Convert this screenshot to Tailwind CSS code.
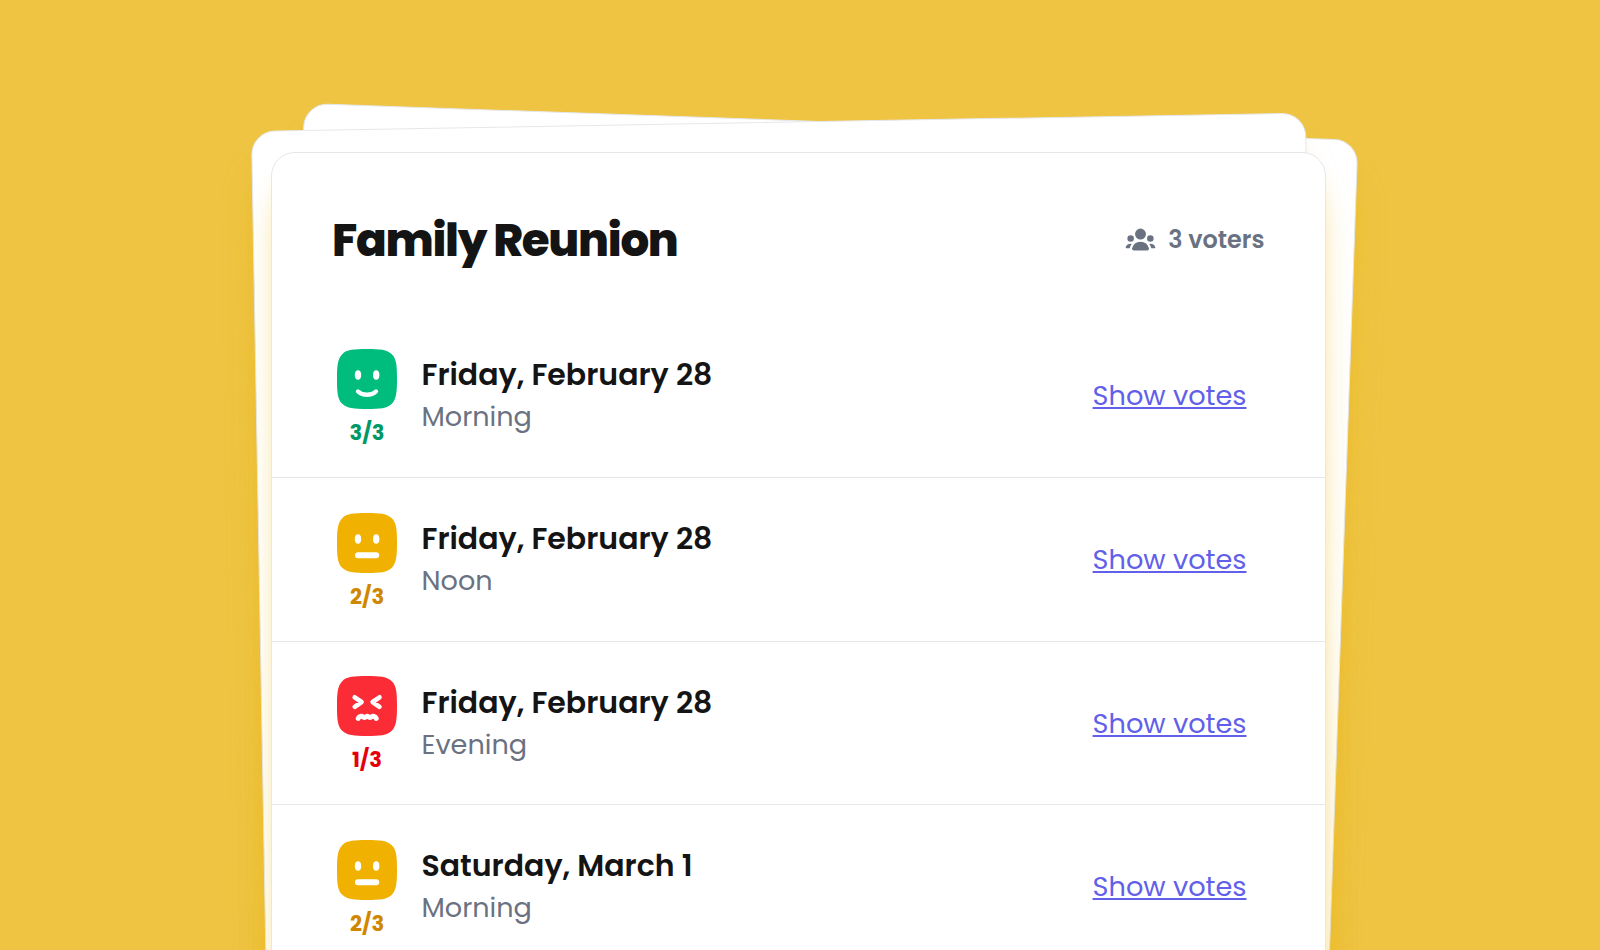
<!DOCTYPE html>
<html lang="en">
<head>
    <meta charset="UTF-8">
    <meta name="viewport" content="width=device-width, initial-scale=1.0">
    <title>Family Reunion</title>
    <script src="https://cdn.jsdelivr.net/npm/@tailwindcss/browser@4"></script>
</head>
<body class="h-screen overflow-hidden bg-[#eec442] font-['Poppins','Inter',sans-serif] text-[#141414]">
    <!-- Face icons -->
    <svg class="hidden">
        <symbol id="tile" viewBox="0 0 60 60">
            <path d="M30 0c13 0 20 .6 24.800 5.200S60 17 60 30s-.6 20-5.200 24.800S43 60 30 60s-20-.6-24.800-5.200S0 43 0 30 .6 10 5.200 5.200 17 0 30 0Z"/>
        </symbol>
        <symbol id="yes" viewBox="0 0 60 60">
            <use href="#tile" width="60" height="60"/>
            <g fill="#fff">
                <ellipse cx="21" cy="26" rx="3.2" ry="4.7"/>
                <ellipse cx="39.2" cy="26" rx="3.2" ry="4.7"/>
            </g>
            <path d="M21 42.500c4.800 4.400 13.200 4.400 18 0" fill="none" stroke="#fff" stroke-width="4.400" stroke-linecap="round"/>
        </symbol>
        <symbol id="maybe" viewBox="0 0 60 60">
            <use href="#tile" width="60" height="60"/>
            <g fill="#fff">
                <ellipse cx="21" cy="26" rx="3.2" ry="4.7"/>
                <ellipse cx="39.2" cy="26" rx="3.2" ry="4.7"/>
                <rect x="18" y="39.300" width="24.200" height="6" rx="3"/>
            </g>
        </symbol>
        <symbol id="no" viewBox="0 0 60 60">
            <use href="#tile" width="60" height="60"/>
            <g fill="none" stroke="#fff" stroke-linecap="round" stroke-linejoin="round">
                <path d="m17.700 21.300 6.900 4.700-6.900 4.800M42.500 21.300 35.600 26l6.900 4.800" stroke-width="4.600"/>
                <path d="M21.200 42.300c.8-2.200 3.200-2.600 5-1.300 1.300.9 2 .6 3-.3.600-.5 1.400-.5 2 0 1 .9 1.700 1.200 3 .3 1.800-1.300 4.200-.9 5 1.300" stroke-width="5"/>
            </g>
        </symbol>
    </svg>

    <main class="relative ml-[270.500px] mt-[152px] w-[1055px]">
        <!-- Sheets behind the poll -->
        <div class="absolute left-[33.500px] top-[-49px] h-[1800px] w-full origin-top-left rotate-2 rounded-3xl border border-gray-200 bg-white shadow-[0_38px_36px_-8px_rgb(238_182_5/0.38),0_14px_15px_-9px_rgb(238_182_5/0.38)]"></div>
        <div class="absolute left-[-20px] top-[-21px] h-[1800px] w-full origin-top-left -rotate-1 rounded-3xl border border-gray-200 bg-white shadow-[0_38px_36px_-8px_rgb(238_182_5/0.38),0_14px_15px_-9px_rgb(238_182_5/0.38)]"></div>

        <div class="relative h-[1800px] rounded-3xl border border-gray-200 bg-white shadow-[0_38px_36px_-8px_rgb(238_182_5/0.38),0_14px_15px_-9px_rgb(238_182_5/0.38)]">
            <header class="flex h-[161.500px] items-center justify-between pl-[60.500px] pr-[60px] pt-[13px]">
                <h1 class="pt-px text-[45.200px] font-extrabold tracking-[-1.300px]">Family Reunion</h1>
                <div class="flex items-center gap-[10px] pb-px text-gray-500">
                    <svg class="size-[35px]" viewBox="0 0 16 16" fill="currentColor">
                        <path d="M8 8a2.500 2.500 0 1 0 0-5 2.500 2.500 0 0 0 0 5ZM3.156 11.763c.16-.629.44-1.21.813-1.720a2.500 2.500 0 0 0-2.725 1.377c-.136.287.102.58.418.58h1.449c.01-.077.025-.156.045-.237ZM12.847 11.763c.02.08.036.16.046.237h1.446c.316 0 .554-.293.417-.579a2.500 2.500 0 0 0-2.722-1.378c.374.51.653 1.090.813 1.720ZM14 7.500a1.500 1.500 0 1 1-3 0 1.500 1.500 0 0 1 3 0ZM3.500 9a1.500 1.500 0 1 0 0-3 1.500 1.500 0 0 0 0 3ZM5 13c-.552 0-1.013-.455-.876-.99a4.002 4.002 0 0 1 7.753 0c.136.535-.324.99-.877.99H5Z"/>
                    </svg>
                    <span class="text-[23.900px] leading-[35px] font-semibold">3 voters</span>
                </div>
            </header>

            <ul class="divide-y divide-gray-200">
                <li class="flex h-[163.500px] items-start pl-[65.500px] pr-[78px] pt-[34.500px]">
                    <div class="flex w-[60px] flex-col items-center text-[#00bc7d]">
                        <svg class="size-[60px]" fill="currentColor"><use href="#yes"/></svg>
                        <span class="mt-[8px] text-[21px] leading-[32px] font-bold text-[#009966]">3/3</span>
                    </div>
                    <div class="ml-[24.500px] mt-[4px] flex-1">
                        <div class="text-[30px] leading-[44px] font-semibold">Friday, February 28</div>
                        <div class="text-[27.100px] leading-[40px] text-gray-500">Morning</div>
                    </div>
                    <a href="#" class="mt-[27px] text-[27.200px] leading-[40px] text-[#625fea] underline decoration-2 underline-offset-2">Show votes</a>
                </li>
                <li class="flex h-[163.500px] items-start pl-[65.500px] pr-[78px] pt-[34.500px]">
                    <div class="flex w-[60px] flex-col items-center text-[#f0b100]">
                        <svg class="size-[60px]" fill="currentColor"><use href="#maybe"/></svg>
                        <span class="mt-[8px] text-[21px] leading-[32px] font-bold text-[#d08700]">2/3</span>
                    </div>
                    <div class="ml-[24.500px] mt-[4.500px] flex-1">
                        <div class="text-[30px] leading-[44px] font-semibold">Friday, February 28</div>
                        <div class="text-[27.100px] leading-[40px] text-gray-500">Noon</div>
                    </div>
                    <a href="#" class="mt-[27.500px] text-[27.200px] leading-[40px] text-[#625fea] underline decoration-2 underline-offset-2">Show votes</a>
                </li>
                <li class="flex h-[163.500px] items-start pl-[65.500px] pr-[78px] pt-[34.500px]">
                    <div class="flex w-[60px] flex-col items-center text-[#fb2c36]">
                        <svg class="size-[60px]" fill="currentColor"><use href="#no"/></svg>
                        <span class="mt-[8px] text-[21px] leading-[32px] font-bold text-[#e7000b]">1/3</span>
                    </div>
                    <div class="ml-[24.500px] mt-[4.500px] flex-1">
                        <div class="text-[30px] leading-[44px] font-semibold">Friday, February 28</div>
                        <div class="text-[27.100px] leading-[40px] text-gray-500">Evening</div>
                    </div>
                    <a href="#" class="mt-[27.500px] text-[27.200px] leading-[40px] text-[#625fea] underline decoration-2 underline-offset-2">Show votes</a>
                </li>
                <li class="flex h-[163.500px] items-start pl-[65.500px] pr-[78px] pt-[34.500px]">
                    <div class="flex w-[60px] flex-col items-center text-[#f0b100]">
                        <svg class="size-[60px]" fill="currentColor"><use href="#maybe"/></svg>
                        <span class="mt-[8px] text-[21px] leading-[32px] font-bold text-[#d08700]">2/3</span>
                    </div>
                    <div class="ml-[24.500px] mt-[4.500px] flex-1">
                        <div class="text-[30px] leading-[44px] font-semibold">Saturday, March 1</div>
                        <div class="text-[27.100px] leading-[40px] text-gray-500">Morning</div>
                    </div>
                    <a href="#" class="mt-[27.500px] text-[27.200px] leading-[40px] text-[#625fea] underline decoration-2 underline-offset-2">Show votes</a>
                </li>
            </ul>
        </div>
    </main>
</body>
</html>
